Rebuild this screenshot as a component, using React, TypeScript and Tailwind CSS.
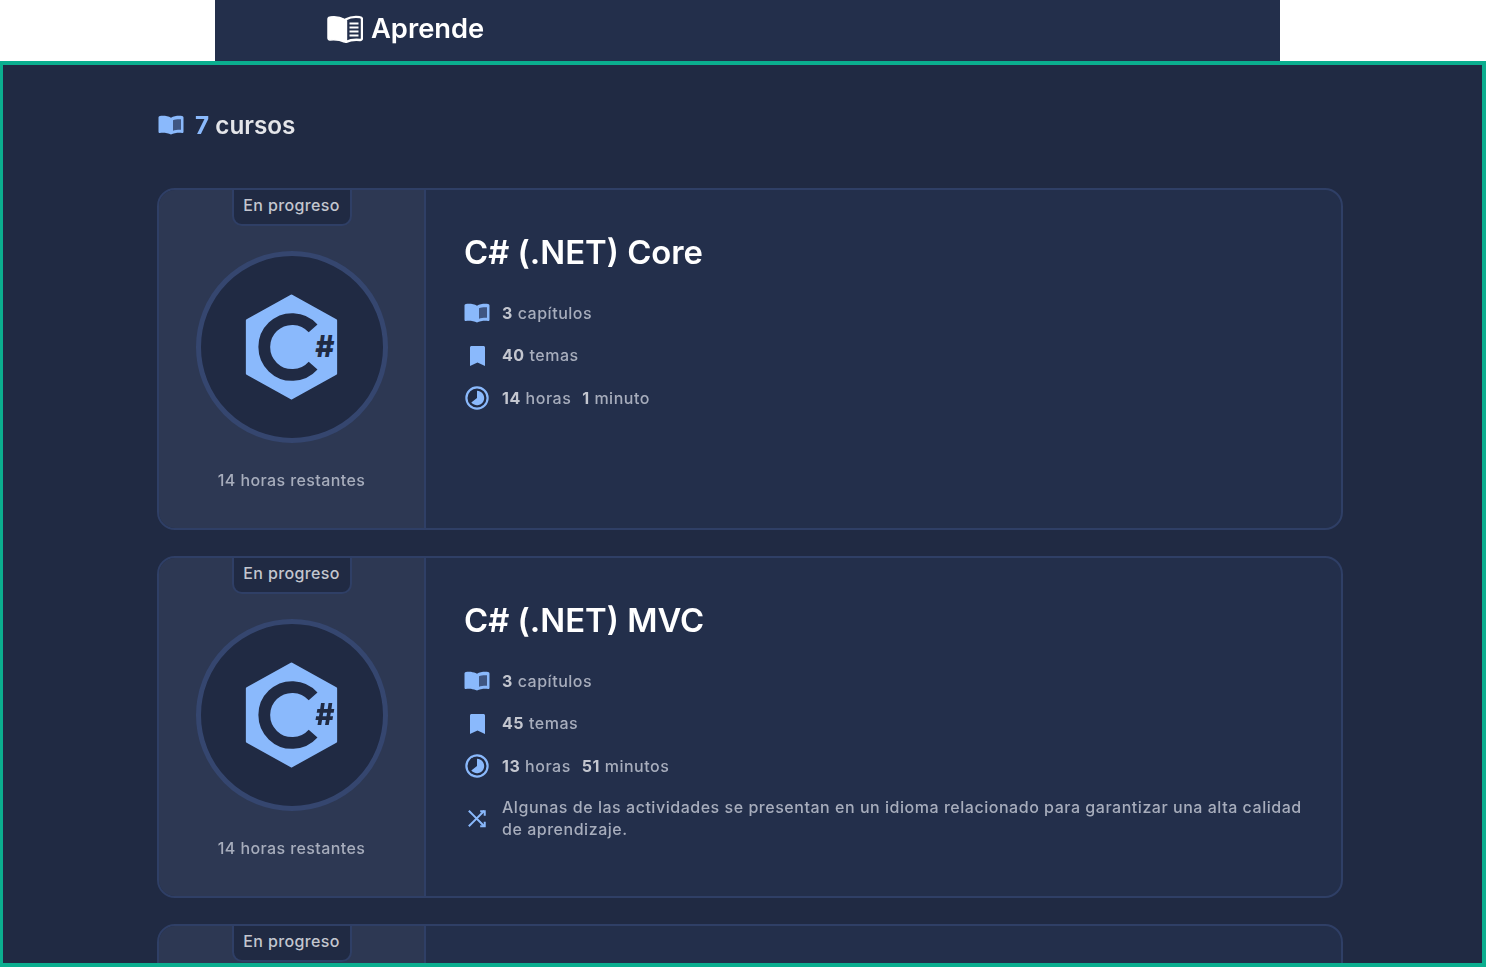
const courses = [
  { title: "C# (.NET) Core", chapters: 3, topics: 40, hours: 14, mins: "1", minsLabel: "minuto" },
  {
    title: "C# (.NET) MVC",
    chapters: 3,
    topics: 45,
    hours: 13,
    mins: "51",
    minsLabel: "minutos",
    note: "Algunas de las actividades se presentan en un idioma relacionado para garantizar una alta calidad de aprendizaje.",
  },
];

function BookIcon({ className, lines }: { className: string; lines: string }) {
  return (
    <svg viewBox="0 0 36 28" className={className} fill="none">
      <path
        d="M1 4.500C1 3.200 2 2.200 3.300 2.100C8 1.500 13 2 17.500 4.300V27C13 25 8 24.500 3 25C1.800 25.100 1 24.200 1 23Z"
        fill="currentColor"
        stroke="currentColor"
        strokeWidth="1.500"
        strokeLinejoin="round"
      />
      <path
        d="M19 4.300C23 2 28 1.500 32.700 2.100C34 2.200 35 3.200 35 4.500V23C35 24.200 34.200 25.100 33 25C28 24.500 23 25 19 27Z"
        stroke="currentColor"
        strokeWidth="2.400"
        strokeLinejoin="round"
      />
      <path d="M22.500 8.500h9M22.500 12.500h9M22.500 16.500h9M22.500 20.500h9" stroke={lines} strokeWidth="2" />
    </svg>
  );
}

function SmallBook({ className }: { className: string }) {
  return (
    <svg viewBox="0 0 26 20" className={className}>
      <path
        d="M0.500 2.500C0.500 1.700 1.100 1.100 1.900 1C5.500 0.600 10 0.900 13 2.700C16 0.900 20.500 0.600 24.100 1C24.900 1.100 25.500 1.700 25.500 2.500V16.700C25.500 17.500 24.900 18.100 24.100 18C20.500 17.600 16 18 13 19.500C10 18 5.500 17.600 1.900 18C1.100 18.100 0.500 17.500 0.500 16.700Z"
        fill="currentColor"
      />
      <path d="M15 5.200C17 4.300 20 4 23 4.200V14.800C20 14.700 17 15 15 15.800Z" fill="#3f5682" />
    </svg>
  );
}

function BookmarkIcon() {
  return (
    <svg viewBox="0 0 15 20" className="w-[15px] h-[20px] text-[#8ab9fc]">
      <path d="M0 1.500C0 .7.7 0 1.500 0h12C14.300 0 15 .7 15 1.500V20L7.500 16.500 0 20Z" fill="currentColor" />
    </svg>
  );
}

function ClockIcon() {
  return (
    <svg viewBox="0 0 24 24" className="w-6 h-6 text-[#8ab9fc]">
      <circle cx="12" cy="12" r="10.600" fill="#202a43" stroke="currentColor" strokeWidth="2.200" />
      <path d="M12 4.800a7.200 7.200 0 1 1-5.700 11.600L12 12Z" fill="currentColor" />
    </svg>
  );
}

function ShuffleIcon() {
  return (
    <svg viewBox="0 0 22 20" className="w-[20px] h-[19px] text-[#8ab9fc]" fill="none" stroke="currentColor" strokeWidth="2.200">
      <path d="M2 1.500l17 17M2 18.500L19 1.500" />
      <path d="M14.500 2h5v5M19.500 13.500v5h-5" />
    </svg>
  );
}

function CSharpIcon() {
  return (
    <svg viewBox="0 0 94 108" className="w-[93px] h-[106px]">
      <path d="M47 2 92 27V81L47 106 2 81V27Z" fill="#8ab9fc" stroke="#8ab9fc" strokeWidth="3" strokeLinejoin="round" />
      <path d="M69 35A28.500 28.500 0 1 0 69 73" fill="none" stroke="#202a43" strokeWidth="12" />
      <text x="81" y="64" textAnchor="middle" fontFamily="Inter, sans-serif" fontWeight="800" fontSize="30" fill="#202a43">
        #
      </text>
    </svg>
  );
}

function MetaRow({ icon, children, className = "" }: { icon: React.ReactNode; children: React.ReactNode; className?: string }) {
  return (
    <div className={`flex items-center ${className}`}>
      <div className="w-[26px] h-6 flex items-center justify-center shrink-0">{icon}</div>
      <div className="ml-[12px] text-[16px] font-medium leading-[22.500px] tracking-[0.53px] text-[#a7adbc]">{children}</div>
    </div>
  );
}

function CourseCard({ course }: { course: (typeof courses)[number] }) {
  return (
    <div className="flex h-[342px] shrink-0 rounded-[18px] border-2 border-[#2f3f66] bg-[#232f4b] overflow-hidden">
      <div className="w-[267px] shrink-0 border-r-2 border-[#2f3f66] bg-[#2d3853] flex flex-col items-center">
        <Badge />
        <div className="mt-[25px] w-[192px] h-[192px] rounded-full border-[5px] border-[#35466f] bg-[#202a43] flex items-center justify-center">
          <CSharpIcon />
        </div>
        <div className="mt-[25px] text-[16px] font-medium tracking-[0.4px] text-[#a7adbc]">14 horas restantes</div>
      </div>
      <div className="flex-1 pl-[38px] pr-[38px] pt-[39px]">
        <h2 className="text-[32.800px] leading-[46px] font-semibold text-white">{course.title}</h2>
        <div className="mt-[26px] flex flex-col gap-[18.700px]">
          <MetaRow icon={<SmallBook className="w-[26px] h-5 text-[#8ab9fc]" />}>
            <b className="font-bold text-[#c3c6cf]">{course.chapters}</b> capítulos
          </MetaRow>
          <MetaRow icon={<BookmarkIcon />}>
            <b className="font-bold text-[#c3c6cf]">{course.topics}</b> temas
          </MetaRow>
          <MetaRow icon={<ClockIcon />}>
            <b className="font-bold text-[#c3c6cf]">{course.hours}</b> horas{" "}
            <b className="font-bold text-[#c3c6cf] ml-[6px]">{course.mins}</b> {course.minsLabel}
          </MetaRow>
          {course.note && (
            <MetaRow icon={<ShuffleIcon />} className="-mt-[1.500px]">
              {course.note}
            </MetaRow>
          )}
        </div>
      </div>
    </div>
  );
}

function Badge() {
  return (
    <div className="w-[120px] h-[36px] pb-[5px] rounded-b-[10px] border-2 border-t-0 border-[#2f3f66] bg-[#202a43] flex items-center justify-center text-[16px] font-medium tracking-[0.35px] text-[#c3c6cf]">
      En progreso
    </div>
  );
}

export default function App() {
  return (
    <div className="w-[1487px] h-[967px] bg-white overflow-hidden font-['Inter',sans-serif]">
      <header className="mx-[215px] w-[1065px] h-[61px] bg-[#232f4b] pb-[3px] pl-[112px] flex items-center">
        <div className="flex items-center gap-[8px] blur-[0.4px]">
          <BookIcon className="w-[36px] h-[28px] text-white" lines="#ffffff" />
          <h1 className="text-[27.300px] font-semibold text-white">Aprende</h1>
        </div>
      </header>
      <main className="w-[1486px] h-[906px] border-4 border-l-[3px] border-[#0bae8f] bg-[#202a43] overflow-hidden pl-[154px] pr-[139px]">
        <div className="blur-[0.5px]">
          <div className="mt-[43px] ml-px flex items-center gap-[11px]">
            <SmallBook className="w-[26px] h-5 text-[#8ab9fc]" />
            <p className="text-[24.300px] font-semibold leading-[34px] text-[#e4e5e9]">
              <span className="font-bold text-[#8ab9fc]">7</span> cursos
            </p>
          </div>
          <div className="mt-[46px] flex flex-col gap-[26px]">
            {courses.map((c) => (
              <CourseCard key={c.title} course={c} />
            ))}
            <div className="flex h-[342px] shrink-0 rounded-[18px] border-2 border-[#2f3f66] bg-[#232f4b] overflow-hidden">
              <div className="w-[267px] shrink-0 border-r-2 border-[#2f3f66] bg-[#2d3853] flex flex-col items-center">
                <Badge />
              </div>
            </div>
          </div>
        </div>
      </main>
    </div>
  );
}
